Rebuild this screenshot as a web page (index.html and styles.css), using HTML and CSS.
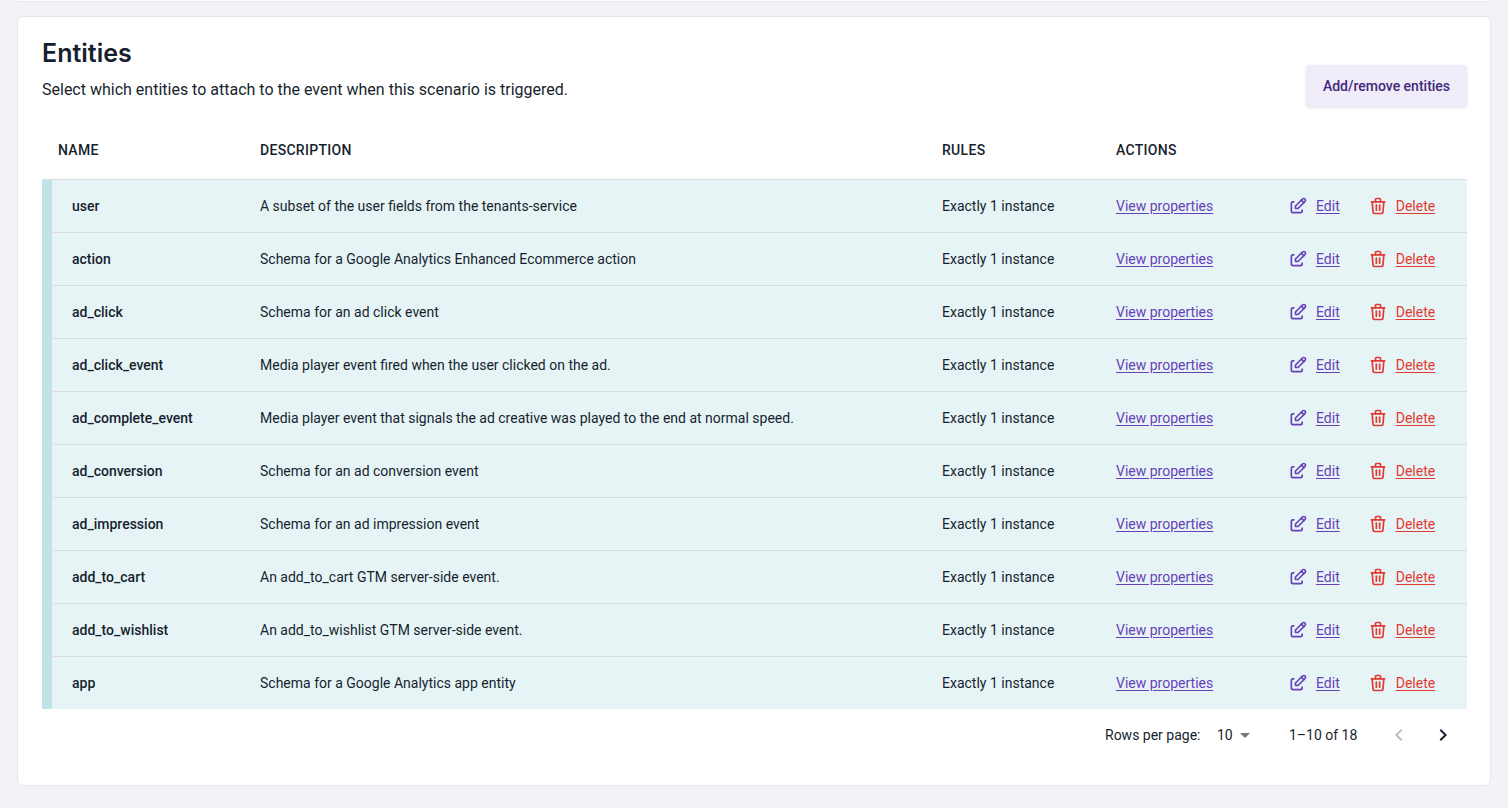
FILE: index.html
```html
<!DOCTYPE html>
<html lang="en">
<head>
<meta charset="utf-8">
<title>Entities</title>
<link rel="stylesheet" href="styles.css">
</head>
<body>
<svg class="sprites" width="0" height="0" aria-hidden="true">
  <symbol id="i-edit" viewBox="0 0 24 24"><path d="M7 7H6a2 2 0 0 0-2 2v9a2 2 0 0 0 2 2h9a2 2 0 0 0 2-2v-1"/><path d="M20.385 6.585a2.1 2.1 0 0 0-2.97-2.97L9 12v3h3l8.385-8.415z"/><path d="M16 5l3 3"/></symbol>
  <symbol id="i-trash" viewBox="0 0 24 24"><path d="M4 7h16"/><path d="M10 11v6"/><path d="M14 11v6"/><path d="M5 7l1 12a2 2 0 0 0 2 2h8a2 2 0 0 0 2-2l1-12"/><path d="M9 7V4a1 1 0 0 1 1-1h4a1 1 0 0 1 1 1v3"/></symbol>
</svg>
<div class="stub"></div>
<main class="card">
  <header class="head">
    <div>
      <h2 class="title">Entities</h2>
      <p class="sub">Select which entities to attach to the event when this scenario is triggered.</p>
    </div>
    <button class="btn" type="button">Add/remove entities</button>
  </header>
  <table class="grid">
    <colgroup><col class="c1"><col class="c2"><col class="c3"><col class="c4"><col></colgroup>
    <thead><tr><th>Name</th><th>Description</th><th>Rules</th><th>Actions</th><th></th></tr></thead>
    <tbody>
      <tr><td class="name">user</td><td>A subset of the user fields from the tenants-service</td><td>Exactly 1 instance</td><td><a class="lnk" href="#">View properties</a></td><td><div class="acts"><a class="act edit" href="#"><svg class="ico"><use href="#i-edit"/></svg><span>Edit</span></a><a class="act del" href="#"><svg class="ico"><use href="#i-trash"/></svg><span>Delete</span></a></div></td></tr>
      <tr><td class="name">action</td><td>Schema for a Google Analytics Enhanced Ecommerce action</td><td>Exactly 1 instance</td><td><a class="lnk" href="#">View properties</a></td><td><div class="acts"><a class="act edit" href="#"><svg class="ico"><use href="#i-edit"/></svg><span>Edit</span></a><a class="act del" href="#"><svg class="ico"><use href="#i-trash"/></svg><span>Delete</span></a></div></td></tr>
      <tr><td class="name">ad_click</td><td>Schema for an ad click event</td><td>Exactly 1 instance</td><td><a class="lnk" href="#">View properties</a></td><td><div class="acts"><a class="act edit" href="#"><svg class="ico"><use href="#i-edit"/></svg><span>Edit</span></a><a class="act del" href="#"><svg class="ico"><use href="#i-trash"/></svg><span>Delete</span></a></div></td></tr>
      <tr><td class="name">ad_click_event</td><td>Media player event fired when the user clicked on the ad.</td><td>Exactly 1 instance</td><td><a class="lnk" href="#">View properties</a></td><td><div class="acts"><a class="act edit" href="#"><svg class="ico"><use href="#i-edit"/></svg><span>Edit</span></a><a class="act del" href="#"><svg class="ico"><use href="#i-trash"/></svg><span>Delete</span></a></div></td></tr>
      <tr><td class="name">ad_complete_event</td><td>Media player event that signals the ad creative was played to the end at normal speed.</td><td>Exactly 1 instance</td><td><a class="lnk" href="#">View properties</a></td><td><div class="acts"><a class="act edit" href="#"><svg class="ico"><use href="#i-edit"/></svg><span>Edit</span></a><a class="act del" href="#"><svg class="ico"><use href="#i-trash"/></svg><span>Delete</span></a></div></td></tr>
      <tr><td class="name">ad_conversion</td><td>Schema for an ad conversion event</td><td>Exactly 1 instance</td><td><a class="lnk" href="#">View properties</a></td><td><div class="acts"><a class="act edit" href="#"><svg class="ico"><use href="#i-edit"/></svg><span>Edit</span></a><a class="act del" href="#"><svg class="ico"><use href="#i-trash"/></svg><span>Delete</span></a></div></td></tr>
      <tr><td class="name">ad_impression</td><td>Schema for an ad impression event</td><td>Exactly 1 instance</td><td><a class="lnk" href="#">View properties</a></td><td><div class="acts"><a class="act edit" href="#"><svg class="ico"><use href="#i-edit"/></svg><span>Edit</span></a><a class="act del" href="#"><svg class="ico"><use href="#i-trash"/></svg><span>Delete</span></a></div></td></tr>
      <tr><td class="name">add_to_cart</td><td>An add_to_cart GTM server-side event.</td><td>Exactly 1 instance</td><td><a class="lnk" href="#">View properties</a></td><td><div class="acts"><a class="act edit" href="#"><svg class="ico"><use href="#i-edit"/></svg><span>Edit</span></a><a class="act del" href="#"><svg class="ico"><use href="#i-trash"/></svg><span>Delete</span></a></div></td></tr>
      <tr><td class="name">add_to_wishlist</td><td>An add_to_wishlist GTM server-side event.</td><td>Exactly 1 instance</td><td><a class="lnk" href="#">View properties</a></td><td><div class="acts"><a class="act edit" href="#"><svg class="ico"><use href="#i-edit"/></svg><span>Edit</span></a><a class="act del" href="#"><svg class="ico"><use href="#i-trash"/></svg><span>Delete</span></a></div></td></tr>
      <tr><td class="name">app</td><td>Schema for a Google Analytics app entity</td><td>Exactly 1 instance</td><td><a class="lnk" href="#">View properties</a></td><td><div class="acts"><a class="act edit" href="#"><svg class="ico"><use href="#i-edit"/></svg><span>Edit</span></a><a class="act del" href="#"><svg class="ico"><use href="#i-trash"/></svg><span>Delete</span></a></div></td></tr>
    </tbody>
  </table>
  <footer class="pager">
    <span class="rows">Rows per page:</span>
    <span class="sel">10<svg class="caret" viewBox="0 0 10 5"><path d="M0 0h10L5 5z"/></svg></span>
    <span class="range">1–10 of 18</span>
    <span class="nav">
      <svg class="chev off" viewBox="0 0 24 24"><path d="M15.4 7.4 14 6l-6 6 6 6 1.4-1.4L10.8 12z"/></svg>
      <svg class="chev" viewBox="0 0 24 24"><path d="M10 6 8.6 7.4l4.6 4.6-4.6 4.6L10 18l6-6z"/></svg>
    </span>
  </footer>
</main>
</body>
</html>
```
FILE: styles.css
```css
* { box-sizing: border-box; }
html, body { margin: 0; height: 808px; overflow: hidden; }
body {
  background: #f2f3f8;
  font-family: Roboto, "Liberation Sans", sans-serif;
  color: #171f2e;
  padding: 0 17px;
}
.sprites { position: absolute; }
.stub {
  height: 2px;
  background: #fff;
  border: 1px solid #e6e7ec;
  border-top: 0;
  border-radius: 0 0 4px 4px;
  margin-bottom: 14px;
}
.card {
  height: 770px;
  background: #fff;
  border: 1px solid #e6e7ec;
  border-radius: 6px;
  padding: 18px 23px 0 24px;
}
.head { display: flex; justify-content: space-between; align-items: flex-start; height: 84px; }
.title {
  margin: 0;
  font-family: Inter, Roboto, sans-serif;
  font-size: 25px;
  line-height: 36px;
  font-weight: 600;
}
.sub { margin: 7px 0 0; font-size: 16px; line-height: 24px; }
.btn {
  margin-top: 30px;
  width: 161px;
  height: 42px;
  border: 0;
  border-radius: 4px;
  background: #efebf8;
  color: #41287a;
  font: 500 14px/20px Roboto, sans-serif;
  box-shadow: 0 1px 3px rgba(30, 20, 60, .12);
}
.grid { width: 1425px; border-collapse: separate; border-spacing: 0; table-layout: fixed; }
.c1 { width: 202px; }
.c2 { width: 682px; }
.c3 { width: 174px; }
.c4 { width: 174px; }
th {
  height: 61px;
  padding: 2px 0 0 16px;
  text-align: left;
  font-size: 14px;
  font-weight: 500;
  letter-spacing: .3px;
  text-transform: uppercase;
  border-bottom: 1px solid #d9dde0;
}
td {
  height: 53px;
  padding: 0 0 0 16px;
  font-size: 14px;
  background: #e6f4f6;
  border-bottom: 1px solid #d9dde0;
}
tbody tr:last-child td { height: 52px; border-bottom: 0; }
td.name {
  padding-left: 20px;
  font-weight: 500;
  border-left: 10px solid #bfe3e6;
}
.lnk { color: #6741b8; text-decoration: underline; text-underline-offset: 2px; }
.acts { display: flex; margin-left: -2px; gap: 28px; }
.act { display: flex; align-items: center; gap: 8px; text-decoration: underline; text-underline-offset: 2px; }
.act.edit { color: #6741b8; }
.act.del { color: #e23a33; }
.ico { width: 20px; height: 20px; fill: none; stroke: currentColor; stroke-width: 2; stroke-linecap: round; stroke-linejoin: round; }
.pager {
  display: flex;
  align-items: center;
  height: 52px;
  font-size: 14px;
  padding-left: 1063px;
}
.rows { width: 112px; }
.sel { display: flex; align-items: center; gap: 7px; width: 72px; }
.caret { width: 10px; height: 5px; fill: #75767c; }
.range { width: 98px; }
.nav { display: flex; gap: 20px; }
.chev { width: 24px; height: 24px; fill: #171f2e; }
.chev.off { fill: #bdbdbd; }
```
